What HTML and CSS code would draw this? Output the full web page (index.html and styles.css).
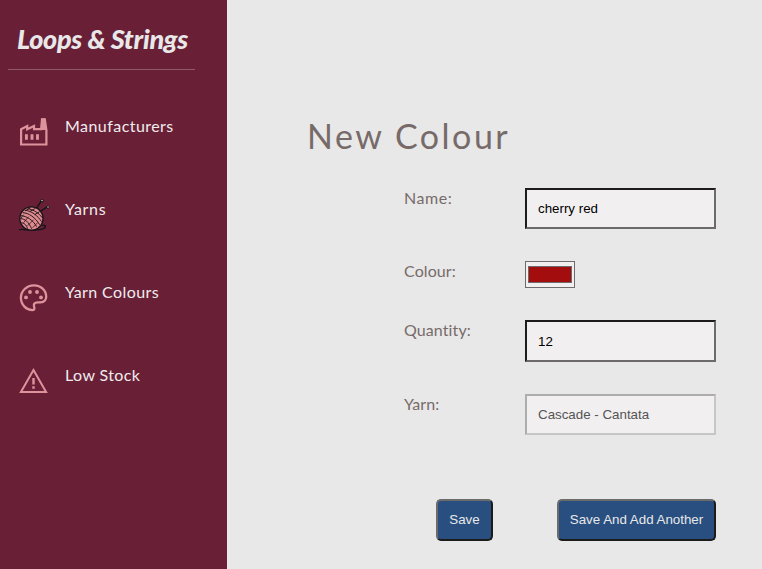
FILE: index.html
```html
<!DOCTYPE html>
<html lang="en">
<head>
<meta charset="utf-8">
<title>Loops &amp; Strings</title>
<link rel="stylesheet" href="styles.css">
</head>
<body>
<div class="app">
  <aside class="sidebar">
    <div class="brand"><span class="brand-name">Loops &amp; Strings</span></div>
    <nav class="menu">
      <a class="item">
        <svg class="icon" viewBox="0 0 32 32" fill="none" stroke="#de939c" stroke-width="2.2">
          <path d="M3.1 28.5V13.2L9.2 10V13.2L16 10V13.2H23.2L24 3.4H26.8L28.4 14V28.5Z"/>
          <path d="M23.3 2.6h4l1.2 11.4h-6z" fill="#de939c" stroke="none"/>
          <path d="M8.4 18.2v5.6M14 18.2v5.6M19.5 18.2v5.6" stroke-width="2.9"/>
        </svg>
        <span class="text manufacturers">Manufacturers</span>
      </a>
      <a class="item">
        <svg class="icon" viewBox="0 0 32 32" fill="none">
          <g transform="translate(-2.4 -1.3)">
            <path d="M20 12L26.2 2.5M23 15L32 8.8" stroke="#17151a" stroke-width="1.5"/>
            <circle cx="26.4" cy="3" r="1.7" fill="#17151a"/><circle cx="26.4" cy="2.8" r=".7" fill="#eee"/>
            <circle cx="32.2" cy="9.4" r="1.7" fill="#17151a"/><circle cx="32.4" cy="9.3" r=".7" fill="#eee"/>
            <path d="M3.5 32.4C5 30.7 8 32.2 11 32.1C18 32.2 24 33 28 31C31 29.4 29.8 26.6 26.5 28" stroke="#17151a" stroke-width="1.4"/>
            <circle cx="15.8" cy="20.8" r="11.6" fill="#de8b90" stroke="#17151a" stroke-width="1.4"/>
            <path d="M7 15C13 15 20 20 24 27M9 12.5C16 13 22 18 26 24M12 11C18 12 23 15 26.5 20M5 18C11 18 18 23 21 29" stroke="#29171d" stroke-width="1"/>
            <path d="M5 21C9 21 13 24 16 31M5 25C8 25 11 27 12 31M15 10L10 13M20 10.5L14 14M24 14L19 17" stroke="#29171d" stroke-width="1"/>
            <path d="M8 17L5 21M13 19L8 25M18 22L12 28M22 25L17 30" stroke="#29171d" stroke-width=".8"/>
          </g>
        </svg>
        <span class="text yarns">Yarns</span>
      </a>
      <a class="item">
        <svg class="icon" viewBox="0 0 32 32">
          <g transform="translate(0 -.8)">
            <path d="M16 4.1C8.6 4.1 2.9 9.7 2.9 16.6C2.9 23.8 8.5 28.9 14.4 28.9Q16.4 28.9 16.4 27C16.4 25.6 15.5 25 16 23.1C16.5 21.5 18 21.1 20 21.1H22.5C26.2 21.1 28.2 18.6 28.2 15.6C28.2 9 22.9 4.1 16 4.1Z" fill="none" stroke="#de939c" stroke-width="2.3"/>
            <g fill="#de939c"><circle cx="8" cy="16.2" r="1.9"/><circle cx="12" cy="10.8" r="1.9"/><circle cx="19" cy="10.8" r="1.9"/><circle cx="23" cy="16.2" r="1.9"/></g>
          </g>
        </svg>
        <span class="text colours">Yarn Colours</span>
      </a>
      <a class="item">
        <svg class="icon" viewBox="0 0 32 32" fill="none" stroke="#de939c">
          <path d="M15.5 5L28.1 27H2.9Z" stroke-width="2"/>
          <path d="M15.5 13v6.4M15.5 21.3v2.4" stroke-width="2.4"/>
        </svg>
        <span class="text stock">Low Stock</span>
      </a>
    </nav>
  </aside>
  <main class="content">
    <h1>New Colour</h1>
    <form class="form">
      <label class="name">Name:</label>
      <input class="field" type="text" value="cherry red">
      <label class="colour">Colour:</label>
      <div class="swatch"><div class="swatch-fill"></div></div>
      <label class="quantity">Quantity:</label>
      <input class="field" type="text" value="12">
      <label class="yarn">Yarn:</label>
      <input class="field disabled" type="text" value="Cascade - Cantata" disabled>
    </form>
    <div class="actions">
      <button class="save" type="button">Save</button>
      <button class="another" type="button">Save And Add Another</button>
    </div>
  </main>
</div>
</body>
</html>
```
FILE: styles.css
```css
* { box-sizing: border-box; }
body { margin: 0; font-family: Lato, sans-serif; font-size: 16px; }
.app { display: flex; height: 569px; background: #e8e8e8; }
.sidebar { width: 227px; flex: none; background: #692037; }
.brand {
  width: 187px; height: 70px; margin-left: 8px; padding: 20px 0 0 9px;
  border-bottom: 1px solid #8f5967; color: #e8e8e8;
}
.brand-name {
  display: block; font: italic 900 27px/38px Lato, sans-serif;
  letter-spacing: -.3px; white-space: nowrap;
}
.menu { display: flex; flex-direction: column; gap: 51px; padding: 46px 0 0 18px; }
.item { display: flex; height: 32px; color: #f0ecee; }
.icon { width: 32px; height: 32px; flex: none; overflow: visible; }
.text { margin-left: 15px; line-height: 20px; white-space: nowrap; }
.manufacturers { letter-spacing: .45px; }
.yarns { letter-spacing: .7px; }
.colours { letter-spacing: .42px; }
.stock { letter-spacing: .4px; }
.content { flex: 1; padding: 115px 46px 0 80px; }
h1 {
  margin: 0; font-size: 34px; line-height: 42px; font-weight: 400;
  letter-spacing: 2.5px; color: #776b69; white-space: nowrap;
}
.form {
  display: grid; grid-template-columns: 121px 191px;
  grid-template-rows: 41px 27px 42px 41px; row-gap: 32px;
  margin: 31px 0 0 97px;
}
label { line-height: 20px; color: #776b69; }
.name { letter-spacing: .55px; }
.colour, .quantity, .yarn { letter-spacing: .1px; }
.field {
  width: 191px; height: 100%; padding: 0 11px; margin: 0;
  border: 2px solid; border-color: #1d1b1c #6d6a6b #6d6a6b #1d1b1c;
  border-radius: 0; background: #f2eff0; color: #000;
  font: 13.333px "Liberation Sans", Arial, sans-serif;
}
.disabled { border-color: #adadad #c6c6c6 #c6c6c6 #adadad; color: #545454; }
.swatch { width: 50px; height: 27px; padding: 4px 2px; border: 1px solid #6f6c6d; background: #f2eff0; }
.swatch-fill { height: 17px; border: 1px solid #6d6a6b; background: #a30d0d; }
.actions { display: flex; justify-content: flex-end; gap: 64px; margin-top: 64px; }
button {
  height: 42px; padding: 0 0 2px; border: 2px solid; border-radius: 5px;
  border-color: #6b6b6b #1b1b1b #1b1b1b #6b6b6b; background: #284f80; color: #e8e8e8;
  font: 13.333px "Liberation Sans", Arial, sans-serif; white-space: nowrap;
}
.save { width: 57px; }
.another { width: 159px; }
```
